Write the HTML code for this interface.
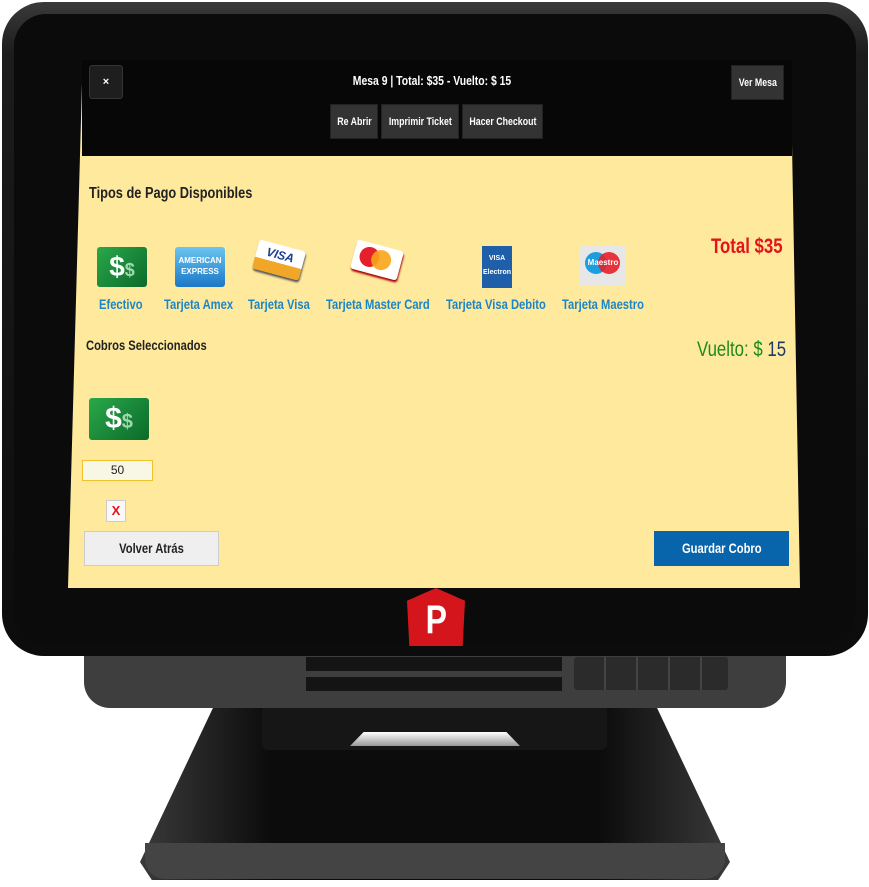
<!DOCTYPE html>
<html><head><meta charset="utf-8"><style>
*{margin:0;padding:0;box-sizing:border-box}
body{width:869px;height:887px;background:#fff;position:relative;overflow:hidden;font-family:"Liberation Sans",sans-serif}
.a{position:absolute}
.n{display:inline-block;transform:scaleX(.8);transform-origin:0 50%;white-space:nowrap}
.c{display:inline-block;transform:scaleX(.8);white-space:nowrap}
.lbl{color:#1a86c8;font-weight:bold;font-size:14px;white-space:nowrap}
.btn{background:#333;color:#fff;font-weight:bold;font-size:11px;display:flex;align-items:center;justify-content:center;border:1px solid #222;white-space:nowrap}
</style></head><body>
<!-- stand base -->
<div class="a" style="left:140px;top:700px;width:590px;height:180px;background:linear-gradient(90deg,#3a3a3a,#0c0c0c 22%,#0c0c0c 78%,#3a3a3a);clip-path:polygon(13% 0,87% 0,100% 90%,98% 100%,2% 100%,0 90%);border-radius:10px"></div>
<div class="a" style="left:145px;top:843px;width:580px;height:36px;background:#444;border-radius:0 0 20px 20px"></div>
<div class="a" style="left:262px;top:705px;width:345px;height:45px;background:#161616;border-radius:6px"></div>
<div class="a" style="left:350px;top:732px;width:170px;height:14px;background:linear-gradient(#fff,#999);clip-path:polygon(8% 0,92% 0,100% 100%,0 100%)"></div>
<!-- hinge -->
<div class="a" style="left:84px;top:645px;width:702px;height:63px;background:#3e3e3e;border-radius:0 0 26px 26px"></div>
<div class="a" style="left:306px;top:657px;width:256px;height:14px;background:#141414"></div>
<div class="a" style="left:306px;top:677px;width:256px;height:14px;background:#141414"></div>
<div class="a" style="left:574px;top:657px;width:154px;height:33px;border-radius:3px;background:repeating-linear-gradient(90deg,#2b2b2b 0 30px,#444 30px 32px)"></div>
<!-- device bezel -->
<div class="a" style="left:2px;top:2px;width:866px;height:654px;background:linear-gradient(#3a3a3a,#1c1c1c 8%,#0c0c0c);border-radius:42px"></div>
<div class="a" style="left:14px;top:14px;width:842px;height:630px;background:#0b0b0b;border-radius:32px"></div>
<!-- screen -->
<div class="a" style="left:68px;top:60px;width:732px;height:528px;background:#ffe99d;clip-path:polygon(2% 0,98.7% 0,100% 100%,0 100%)"></div>
<div class="a" style="left:82px;top:60px;width:710px;height:96px;background:#070707"></div>
<div class="a btn" style="left:89px;top:65px;width:34px;height:34px;background:#1e1e1e;border:1px solid #333;border-radius:3px">×</div>
<div class="a" style="left:82px;top:73px;width:700px;text-align:center;color:#fff;font-weight:bold;font-size:13px"><span class="c">Mesa 9 | Total: $35 - Vuelto: $ 15</span></div>
<div class="a btn" style="left:731px;top:65px;width:53px;height:35px"><span class="c">Ver Mesa</span></div>
<div class="a btn" style="left:330px;top:104px;width:48px;height:35px"><span class="c">Re Abrir</span></div>
<div class="a btn" style="left:381px;top:104px;width:78px;height:35px"><span class="c">Imprimir Ticket</span></div>
<div class="a btn" style="left:462px;top:104px;width:81px;height:35px"><span class="c">Hacer Checkout</span></div>
<div class="a" style="left:89px;top:185px;font-weight:bold;font-size:16px;color:#222"><span class="n">Tipos de Pago Disponibles</span></div>
<!-- icons -->
<div class="a" style="left:97px;top:247px;width:50px;height:40px;background:linear-gradient(135deg,#2aa84a,#0a6a2a);border-radius:3px;color:#fff;font-size:28px;font-weight:bold;text-align:center;line-height:40px">$<span style="font-size:18px;color:#9fd9ae">$</span></div>
<div class="a" style="left:175px;top:247px;width:50px;height:40px;background:linear-gradient(#6cc4f0,#1b78c8);border-radius:3px;color:#fff;font-size:8px;font-weight:bold;text-align:center;padding-top:8px;line-height:11px">AMERICAN<br>EXPRESS</div>
<div class="a" style="left:255px;top:245px;width:48px;height:30px;background:linear-gradient(#fff 60%,#f2a628 60%);border-radius:3px;transform:rotate(15deg);color:#1a3e8f;font-weight:bold;font-style:italic;font-size:12px;text-align:center;line-height:20px;box-shadow:1px 2px 2px #555">VISA</div>
<div class="a" style="left:353px;top:245px;width:48px;height:30px;background:#fff;border-radius:3px;transform:rotate(15deg);box-shadow:1px 2px 2px #a00"><div class="a" style="left:6px;top:4px;width:20px;height:20px;border-radius:50%;background:#e5202a"></div><div class="a" style="left:18px;top:4px;width:20px;height:20px;border-radius:50%;background:#f9a51a;opacity:.9"></div></div>
<div class="a" style="left:482px;top:246px;width:30px;height:42px;background:#1f5ea8;color:#fff;font-size:7px;font-weight:bold;text-align:center;padding-top:6px;line-height:14px">VISA<br>Electron</div>
<div class="a" style="left:580px;top:246px;width:46px;height:40px;background:#e7e7e7;border-radius:2px"><div class="a" style="left:5px;top:6px;width:22px;height:22px;border-radius:50%;background:#1a9ee0"></div><div class="a" style="left:18px;top:6px;width:22px;height:22px;border-radius:50%;background:#e5202a;opacity:.9"></div><div class="a" style="left:0;top:12px;width:46px;text-align:center;color:#fff;font-size:8px;font-weight:bold">Maestro</div></div>
<div class="a lbl" style="left:99px;top:296px"><span class="n">Efectivo</span></div>
<div class="a lbl" style="left:164px;top:296px"><span class="n">Tarjeta Amex</span></div>
<div class="a lbl" style="left:248px;top:296px"><span class="n">Tarjeta Visa</span></div>
<div class="a lbl" style="left:326px;top:296px"><span class="n">Tarjeta Master Card</span></div>
<div class="a lbl" style="left:446px;top:296px"><span class="n">Tarjeta Visa Debito</span></div>
<div class="a lbl" style="left:562px;top:296px"><span class="n">Tarjeta Maestro</span></div>
<div class="a" style="left:711px;top:235px;color:#e4121b;font-weight:bold;font-size:21px"><span class="n">Total $35</span></div>
<div class="a" style="left:86px;top:337px;font-weight:bold;font-size:14px;color:#222"><span class="n">Cobros Seleccionados</span></div>
<div class="a" style="left:697px;top:338px;color:#1e8a1e;font-size:21px"><span class="n">Vuelto: $ <span style="color:#1a3a6a">15</span></span></div>
<div class="a" style="left:89px;top:398px;width:60px;height:42px;background:linear-gradient(135deg,#2aa84a,#0a6a2a);border-radius:3px;color:#fff;font-size:30px;font-weight:bold;text-align:center;line-height:42px">$<span style="font-size:20px;color:#9fd9ae">$</span></div>
<div class="a" style="left:82px;top:460px;width:71px;height:21px;background:#f8f7e6;border:1px solid #f3c12a;text-align:center;font-size:12px;line-height:19px;color:#222">50</div>
<div class="a" style="left:106px;top:500px;width:20px;height:22px;background:#f8f8f8;border:1px solid #ccc;color:#e4121b;font-weight:bold;font-size:13px;text-align:center;line-height:20px">X</div>
<div class="a" style="left:84px;top:531px;width:135px;height:35px;background:#efefef;border:1px solid #ccc;color:#222;font-weight:bold;font-size:14px;text-align:center;line-height:33px"><span class="c">Volver Atrás</span></div>
<div class="a" style="left:654px;top:531px;width:135px;height:35px;background:#0864ab;color:#fff;font-weight:bold;font-size:14px;text-align:center;line-height:35px"><span class="c">Guardar Cobro</span></div>
<!-- logo -->
<div class="a" style="left:407px;top:588px;width:58px;height:58px;background:#d4161c;clip-path:polygon(50% 0,100% 22%,96% 100%,4% 100%,0 22%);color:#fff;font-weight:bold;font-size:40px;text-align:center;line-height:64px"><span class="c">P</span></div>
</body></html>
